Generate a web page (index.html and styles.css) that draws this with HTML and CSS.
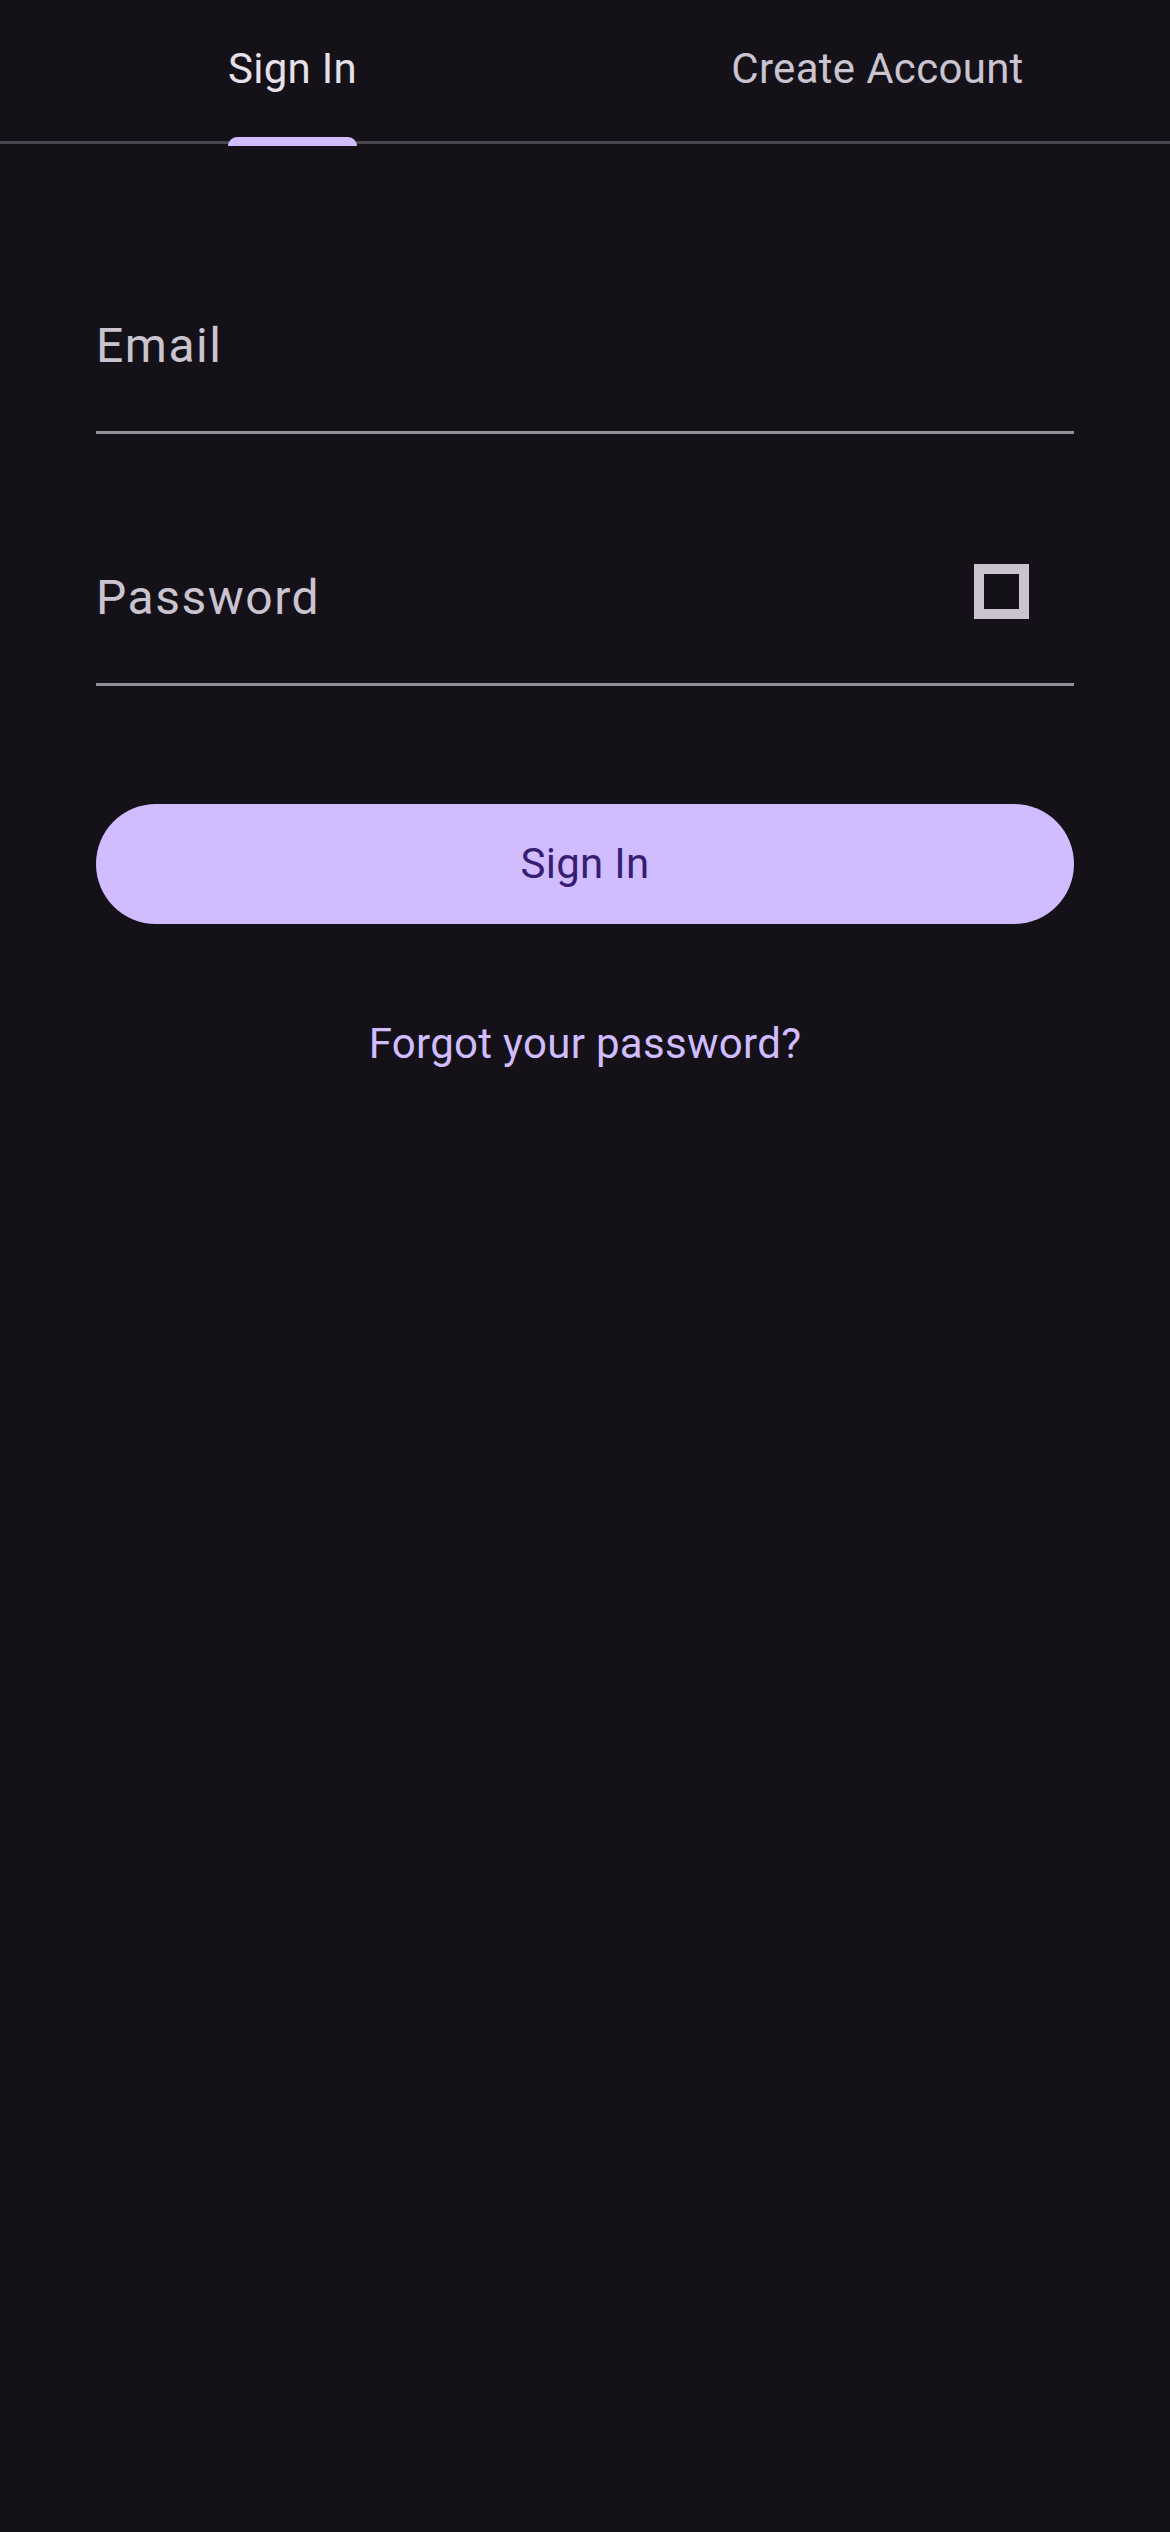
FILE: index.html
```html
<!DOCTYPE html>
<html lang="en">
<head>
<meta charset="utf-8">
<title>Sign In</title>
<link rel="stylesheet" href="styles.css">
</head>
<body>
<div class="screen">
  <nav class="tabs">
    <div class="tab tab-active">
      <span class="tab-label">Sign In<span class="indicator"></span></span>
    </div>
    <div class="tab">
      <span class="tab-label">Create Account</span>
    </div>
  </nav>
  <main class="form">
    <div class="field field-email">
      <span class="field-label">Email</span>
    </div>
    <div class="field field-password">
      <span class="field-label">Password</span>
      <span class="field-icon" aria-hidden="true"></span>
    </div>
    <div class="btn-primary">Sign In</div>
    <div class="btn-text">Forgot your password?</div>
  </main>
</div>
</body>
</html>
```
FILE: styles.css
```css
html, body {
  margin: 0;
  padding: 0;
  background: #141218;
}
body {
  font-family: Roboto, "Noto Sans", "Liberation Sans", sans-serif;
  min-height: 2532px;
}
.screen {
  width: 1170px;
}
.tabs {
  display: flex;
  border-bottom: 3px solid #49454f;
}
.tab {
  flex: 1 1 0;
  height: 141px;
  display: flex;
  align-items: center;
  justify-content: center;
  padding-bottom: 4px;
  box-sizing: border-box;
  font-size: 42px;
  line-height: 42px;
  letter-spacing: 0.3px;
  color: #cac4d0;
}
.tab-active {
  color: #e6e0e9;
}
.tab-label {
  position: relative;
  white-space: nowrap;
}
.indicator {
  position: absolute;
  left: 0;
  right: 0;
  bottom: -56px;
  height: 9px;
  background: #d0bcff;
  border-radius: 9px 9px 0 0;
}
.form {
  padding: 122px 96px 0;
  display: flex;
  flex-direction: column;
}
.field {
  height: 168px;
  box-sizing: border-box;
  border-bottom: 3px solid #938f99;
  display: flex;
  align-items: center;
  justify-content: space-between;
  padding-bottom: 5px;
}
.field-password {
  margin-top: 84px;
  padding-bottom: 6px;
}
.field-label {
  font-size: 48px;
  line-height: 48px;
  letter-spacing: 1.5px;
  color: #cac4d0;
}
.field-icon {
  width: 55px;
  height: 55px;
  box-sizing: border-box;
  border: 10px solid #cac4d0;
  margin-right: 45px;
  margin-bottom: 13px;
}
.btn-primary {
  margin-top: 118px;
  height: 120px;
  border-radius: 60px;
  background: #d0bcff;
  color: #381e72;
  font-size: 42px;
  line-height: 42px;
  letter-spacing: 0.3px;
  display: flex;
  align-items: center;
  justify-content: center;
}
.btn-text {
  margin-top: 60px;
  height: 120px;
  display: flex;
  align-items: center;
  justify-content: center;
  font-size: 42px;
  line-height: 42px;
  letter-spacing: 0.3px;
  color: #d0bcff;
}
```
